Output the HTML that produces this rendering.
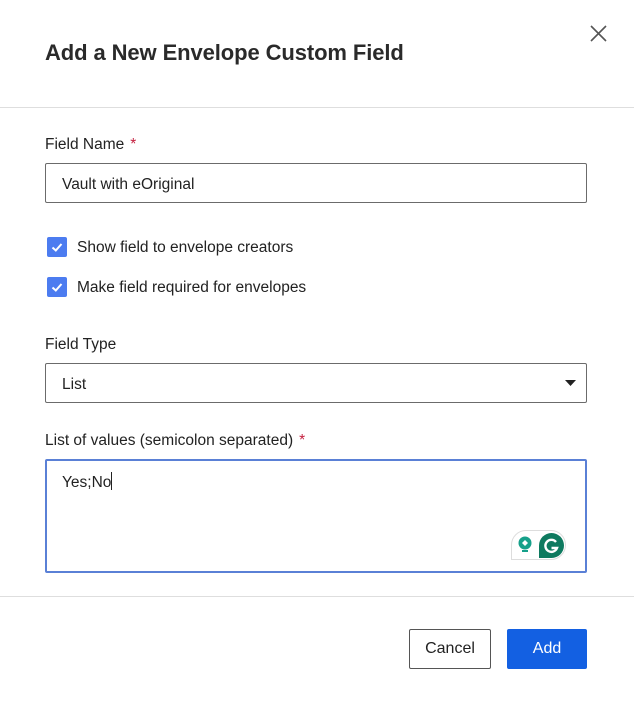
<!DOCTYPE html>
<html><head><style>
*{box-sizing:border-box;margin:0;padding:0}
body{width:634px;height:708px;background:#fff;font-family:"Liberation Sans",sans-serif;color:#1e1e1e;position:relative;overflow:hidden}
.a{position:absolute}
.title{left:45px;top:40px;font-size:22px;font-weight:bold;color:#2a2a2a;letter-spacing:-0.1px}
.hr{left:0;width:634px;height:1px;background:#dedede}
.lbl{left:45px;font-size:15.5px;color:#222}
.lbl b{color:#c41f3e;font-weight:normal;margin-left:6px}
.inp{left:45px;width:542px;height:40px;border:1px solid #6b6b6b;border-radius:2px;font-size:15.5px;padding:12px 0 0 16px;color:#222}
.cb{left:47px;width:20px;height:20px;background:#4c7cf0;border-radius:2px}
.cbt{left:77px;font-size:15.5px;color:#222}
.btn{top:629px;height:40px;font-size:16px;text-align:center;line-height:40px;border-radius:2px}
</style></head><body>
<div class="a title">Add a New Envelope Custom Field</div>
<svg class="a" style="left:590px;top:25px" width="17" height="17"><path d="M1 1L16 16M16 1L1 16" stroke="#555" stroke-width="1.6"/></svg>
<div class="a hr" style="top:107px"></div>
<div class="a lbl" style="top:136px">Field Name<b>*</b></div>
<div class="a inp" style="top:163px">Vault with eOriginal</div>
<div class="a cb" style="top:237px"><svg width="20" height="20"><path d="M5.5 10.5L8.8 13.5L14.5 7" stroke="#fff" stroke-width="2" fill="none"/></svg></div>
<div class="a cbt" style="top:239px">Show field to envelope creators</div>
<div class="a cb" style="top:277px"><svg width="20" height="20"><path d="M5.5 10.5L8.8 13.5L14.5 7" stroke="#fff" stroke-width="2" fill="none"/></svg></div>
<div class="a cbt" style="top:279px">Make field required for envelopes</div>
<div class="a lbl" style="top:336px">Field Type</div>
<div class="a inp" style="top:363px">List</div>
<svg class="a" style="left:565px;top:380px" width="11" height="6"><path d="M0 0H11L5.5 6Z" fill="#222"/></svg>
<div class="a lbl" style="top:432px">List of values (semicolon separated)<b>*</b></div>
<div class="a inp" style="top:459px;height:114px;border:2px solid #5a80d6;padding:11px 0 0 15px">Yes;No<span style="display:inline-block;width:1px;height:18px;background:#222;vertical-align:-3px"></span></div>
<div class="a" style="left:511px;top:530px;width:55px;height:30px;border:1px solid #ddd;border-radius:15px 15px 15px 0;background:#fff"></div>
<svg class="a" style="left:516px;top:535px" width="20" height="20"><circle cx="9" cy="8" r="6.5" fill="#16a08a"/><path d="M9 5L12 8L9 11L6 8Z" fill="#fff"/><rect x="6" y="15" width="6" height="2" fill="#16a08a"/></svg>
<svg class="a" style="left:539px;top:533px" width="25" height="25"><path d="M0 25V12.5A12.5 12.5 0 1 1 12.5 25Z" fill="#0e7a5f"/><path d="M17 9A6 6 0 1 0 18 15H12.5" stroke="#fff" stroke-width="2.4" fill="none"/></svg>
<div class="a hr" style="top:596px"></div>
<div class="a btn" style="left:409px;width:82px;border:1px solid #555;color:#222;line-height:38px">Cancel</div>
<div class="a btn" style="left:507px;width:80px;background:#1360e2;color:#fff">Add</div>
</body></html>
